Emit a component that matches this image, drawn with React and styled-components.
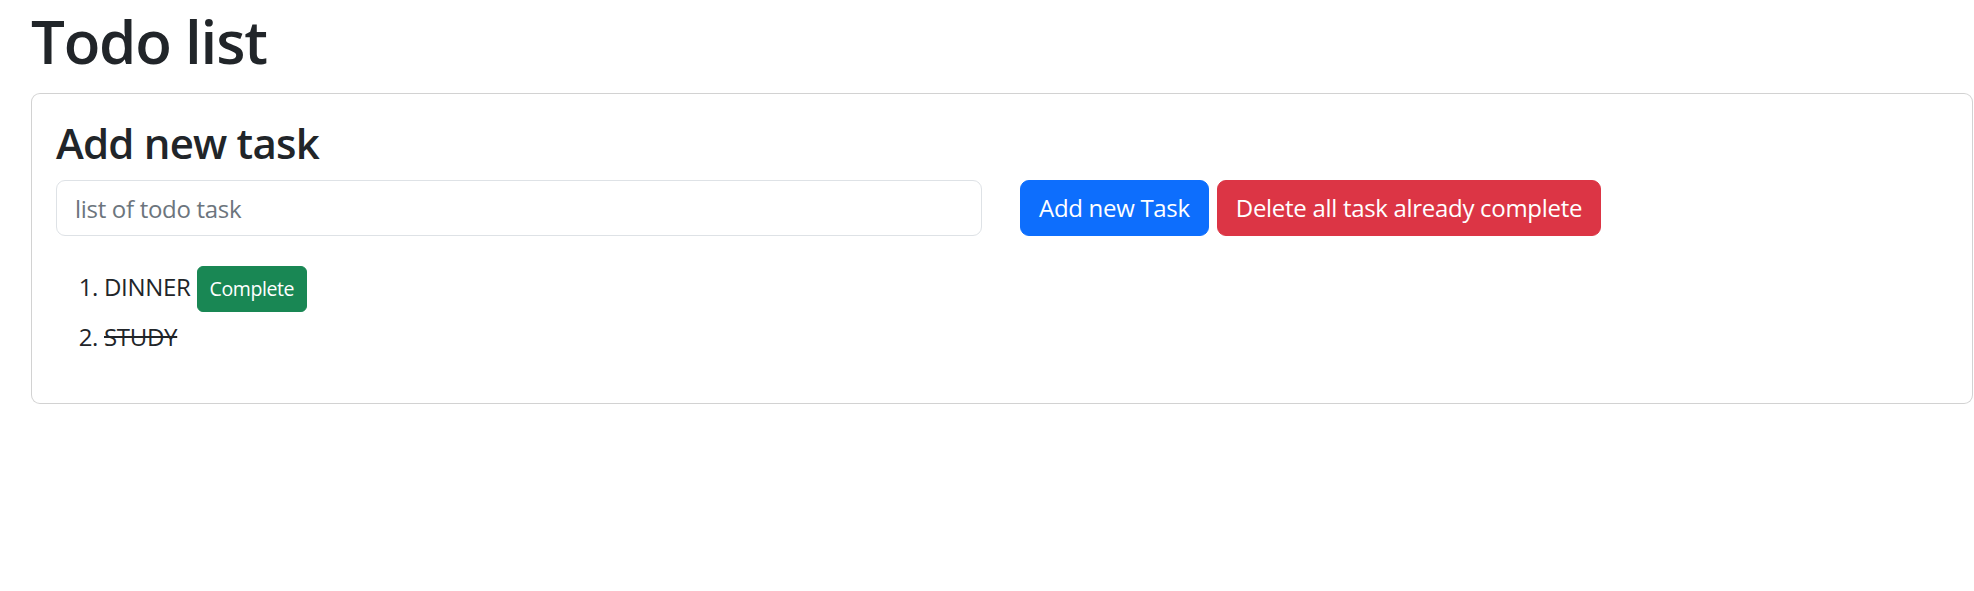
import React, { useState } from 'react'
import styled, { createGlobalStyle } from 'styled-components'

const GlobalStyle = createGlobalStyle`
  body {
    margin: 0;
    background: #fff;
    color: #212529;
    font-family: 'Open Sans', 'Noto Sans', sans-serif;
    font-size: 24px;
    line-height: 1.5;
  }
  * {
    box-sizing: border-box;
  }
`

const Page = styled.div`
  padding: 5px 1px 0 31px;
`

const Title = styled.h1`
  margin: 0 0 16px;
  font-size: 60px;
  font-weight: 600;
  letter-spacing: -1.2px;
  line-height: 72px;
`

const Card = styled.div`
  border: 1px solid rgba(0, 0, 0, 0.175);
  border-radius: 9px;
  padding: 24px;
  background: #fff;
`

const CardTitle = styled.h3`
  margin: 0 0 12px;
  font-size: 42px;
  font-weight: 600;
  letter-spacing: -0.8px;
  line-height: 1.2;
`

const InputRow = styled.div`
  display: flex;
  align-items: center;
`

const TaskInput = styled.input`
  flex: 0 0 926px;
  height: 56px;
  padding: 9px 18px;
  font: inherit;
  letter-spacing: -0.3px;
  color: #212529;
  border: 1px solid #dee2e6;
  border-radius: 9px;
  outline: none;
  &::placeholder {
    color: #6c757d;
  }
`

const colors = {
  primary: '#0d6efd',
  danger: '#dc3545',
  success: '#198754'
}

const Button = styled.button`
  font-family: inherit;
  font-size: ${p => (p.$small ? '19.5px' : '24px')};
  letter-spacing: ${p => (p.$small ? '-0.4px' : '-0.3px')};
  line-height: ${p => (p.$small ? '31.5px' : '36px')};
  padding: ${p => (p.$small ? '6px 12px' : '9px 18px')};
  border-radius: ${p => (p.$small ? '6px' : '9px')};
  background: ${p => colors[p.$variant]};
  border: 1px solid ${p => colors[p.$variant]};
  color: #fff;
  cursor: pointer;
  margin-left: ${p => p.$gap || 0};
  vertical-align: baseline;
`

const TaskList = styled.ol`
  margin: 30px 0 24px;
  padding-left: 48px;
  letter-spacing: -0.3px;
  li + li {
    margin-top: 7px;
  }
`

const TaskText = styled.span`
  text-decoration: ${p => (p.$done ? 'line-through' : 'none')};
`

const App = () => {
  const [tasks, setTasks] = useState([
    { name: 'DINNER', done: false },
    { name: 'STUDY', done: true }
  ])
  const [text, setText] = useState('')

  const addTask = () => {
    if (!text.trim()) return
    setTasks([...tasks, { name: text.toUpperCase(), done: false }])
    setText('')
  }

  const complete = i => {
    setTasks(tasks.map((t, idx) => (idx === i ? { ...t, done: true } : t)))
  }

  return (
    <>
      <GlobalStyle />
      <Page>
        <Title>Todo list</Title>
        <Card>
          <CardTitle>Add new task</CardTitle>
          <InputRow>
            <TaskInput
              placeholder='list of todo task'
              value={text}
              onChange={e => setText(e.target.value)}
            />
            <Button $variant='primary' $gap='38px' onClick={addTask}>Add new Task</Button>
            <Button $variant='danger' $gap='8px' onClick={() => setTasks(tasks.filter(t => !t.done))}>
              Delete all task already complete
            </Button>
          </InputRow>
          <TaskList>
            {tasks.map((t, i) => (
              <li key={i}>
                <TaskText $done={t.done}>{t.name}</TaskText>
                {!t.done && (
                  <>
                    {' '}
                    <Button $small $variant='success' onClick={() => complete(i)}>Complete</Button>
                  </>
                )}
              </li>
            ))}
          </TaskList>
        </Card>
      </Page>
    </>
  )
}

export default App
